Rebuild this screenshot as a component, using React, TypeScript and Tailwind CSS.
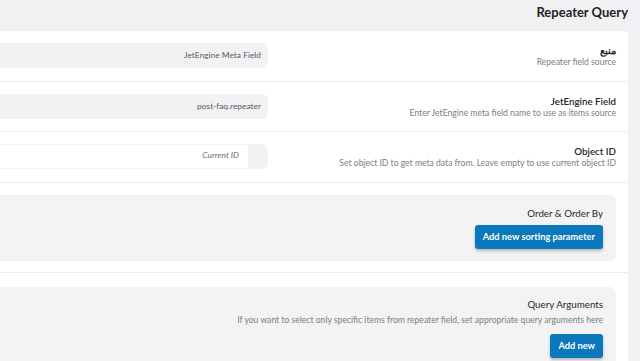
import { ReactNode } from "react";

// Settings panel for the repeater query (RTL-style layout, labels on the right)

function Label({ title, desc }: { title: string; desc?: string }) {
  return (
    <div className="text-right pr-3">
      <div className="text-[9.75px] leading-[12px] font-semibold text-[#23282d]">{title}</div>
      {desc && <div className="text-[8.6px] leading-[12px] text-[#7b7e82]">{desc}</div>}
    </div>
  );
}

function Row({ children }: { children: ReactNode }) {
  return <div className="flex items-center justify-between border-b border-[#ececee]">{children}</div>;
}

function Button({ children }: { children: ReactNode }) {
  return (
    <button className="h-6 px-[8px] rounded-[3px] bg-[#0a78ba] text-white text-[9.25px] font-bold shadow-[0_2px_3px_rgba(0,0,0,0.25)]">
      {children}
    </button>
  );
}

export default function App() {
  return (
    <div
      className="w-[640px] h-[361px] overflow-hidden bg-[#f1f1f3] flex flex-col"
      style={{ fontFamily: "Lato, 'Noto Sans', sans-serif" }}
    >
      <div className="h-[31px] flex items-start justify-end pr-3 pt-[4px]">
        <h1 className="text-[13px] font-bold text-[#1d2327] leading-[16px]">Repeater Query</h1>
      </div>

      <div className="w-[628px] bg-white rounded-tr-[4px] flex-1 flex flex-col">
        <Row>
          <div className="w-[268px] h-[25px] mt-[12px] mb-[13px] bg-[#f2f2f4] rounded-r-md flex items-center justify-end pr-[7px] text-[8.4px] text-[#555a60]">
            JetEngine Meta Field
          </div>
          <Label title="منبع" desc="Repeater field source" />
        </Row>
        <Row>
          <div className="w-[268px] h-[25px] my-3 bg-[#f2f2f4] rounded-r-md flex items-center justify-end pr-[7px] text-[8.4px] text-[#555a60]">
            post-faq.repeater
          </div>
          <Label title="JetEngine Field" desc="Enter JetEngine meta field name to use as items source" />
        </Row>
        <Row>
          <div className="w-[268px] h-[25px] mt-[12px] mb-[13px] bg-[#f2f2f4] rounded-r-md flex py-px">
            <div className="w-[248px] bg-white flex items-start justify-end pr-[9px] pt-[4px] text-[8.4px] italic text-[#6b6f74]">
              Current ID
            </div>
          </div>
          <Label title="Object ID" desc="Set object ID to get meta data from. Leave empty to use current object ID" />
        </Row>

        <div className="border-b border-[#ececee] pt-[12px] pb-[11px] pr-3">
          <div className="h-[66px] bg-[#f3f3f3] rounded-r-md flex flex-col items-end pr-[13px] pt-[12px]">
            <div className="text-[9.75px] leading-[12px] text-[#23282d]">Order &amp; Order By</div>
            <div className="mt-[6px] flex">
              <Button>Add new sorting parameter</Button>
            </div>
          </div>
        </div>

        <div className="pt-[14px] pr-3 flex-1">
          <div className="h-full bg-[#f3f3f3] rounded-tr-md flex flex-col items-end pr-[13px] pt-[11px]">
            <div className="text-[9.75px] leading-[12px] text-[#23282d]">Query Arguments</div>
            <div className="text-[8.6px] leading-[12px] text-[#7b7e82] mt-[4px]">
              If you want to select only specific items from repeater field, set appropriate query arguments here
            </div>
            <div className="mt-[8px] flex">
              <Button>Add new</Button>
            </div>
          </div>
        </div>
      </div>
    </div>
  );
}
